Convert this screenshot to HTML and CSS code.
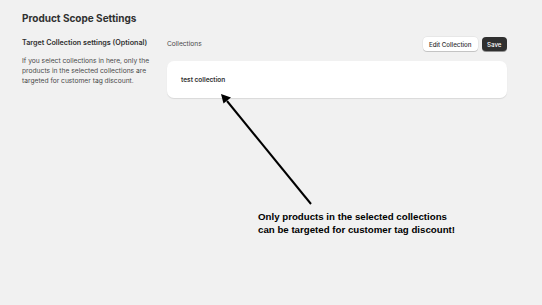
FILE: index.html
```html
<!DOCTYPE html>
<html lang="en">
<head>
    <meta charset="UTF-8">
    <title>Product Scope Settings</title>
    <link rel="stylesheet" href="styles.css">
</head>
<body>
    <div class="page">
        <h1 class="page-title">Product Scope Settings</h1>

        <div class="section">
            <div class="section-info">
                <h2>Target Collection settings (Optional)</h2>
                <p>If you select collections in here, only the products in the selected collections are targeted for customer tag discount.</p>
            </div>
            <div class="section-main">
                <div class="main-head">
                    <span class="main-label">Collections</span>
                    <div class="actions">
                        <button class="btn">Edit Collection</button>
                        <button class="btn btn-dark">Save</button>
                    </div>
                </div>
                <div class="card">
                    <span class="item">test collection</span>
                </div>
            </div>
        </div>
    </div>

    <!-- annotation over the page -->
    <svg class="arrow" width="542" height="305" viewBox="0 0 542 305">
        <line x1="311" y1="204" x2="227" y2="101" stroke="#000" stroke-width="2"/>
        <polygon points="221,94 231,97.5 223.5,103.5" fill="#000"/>
    </svg>
    <div class="note">Only products in the selected collections<br>can be targeted for customer tag discount!</div>
</body>
</html>
```

FILE: styles.css
```css
body, html {
    margin: 0;
    padding: 0;
    width: 100%;
    height: 100%;
    background-color: #f1f1f1;
    font-family: 'Inter', 'Noto Sans', sans-serif;
    color: #303030;
}
.page {
    padding: 12px 35px 0 22px;
}
.page-title {
    margin: 0;
    font-size: 10px;
    font-weight: 700;
    color: #303030;
    line-height: 12px;
}

.section {
    display: flex;
    gap: 13px;
    margin-top: 13px;
}
.section-info {
    width: 132px;
    flex-shrink: 0;
}
.section-info h2 {
    margin: 0;
    font-size: 7.2px;
    font-weight: 600;
    line-height: 12px;
    white-space: nowrap;
    color: #303030;
}
.section-info p {
    margin: 7px 0 0;
    font-size: 6.7px;
    line-height: 10px;
    color: #4a4a4a;
}

.section-main {
    flex: 1;
}
.main-head {
    display: flex;
    justify-content: space-between;
    align-items: center;
    height: 14px;
}
.main-label {
    font-size: 6.6px;
    color: #4a4a4a;
}
.actions {
    display: flex;
    gap: 4px;
}
.btn {
    font-family: inherit;
    font-size: 6.2px;
    font-weight: 500;
    height: 14px;
    padding: 0 6px;
    border: none;
    border-radius: 4px;
    background-color: #fff;
    color: #303030;
    box-shadow: 0 1px 0 rgba(0, 0, 0, 0.15), 0 0 0 0.5px rgba(0, 0, 0, 0.08);
}
.btn-dark {
    padding: 0 5.5px;
    background-color: #303030;
    color: #fff;
    box-shadow: 0 1px 0 rgba(0, 0, 0, 0.4);
}

.card {
    margin-top: 10px;
    height: 37px;
    background-color: #fff;
    border-radius: 7px;
    box-shadow: 0 1px 1px rgba(0, 0, 0, 0.1);
    display: flex;
    align-items: center;
    padding: 0 14px;
}
.item {
    font-size: 6.5px;
    font-weight: 600;
    color: #303030;
}

.arrow {
    position: absolute;
    top: 0;
    left: 0;
}
.note {
    position: absolute;
    left: 258px;
    top: 211px;
    font-family: 'Liberation Sans', Arial, sans-serif;
    font-weight: 700;
    font-size: 9.7px;
    line-height: 12.8px;
    color: #000;
}
```
